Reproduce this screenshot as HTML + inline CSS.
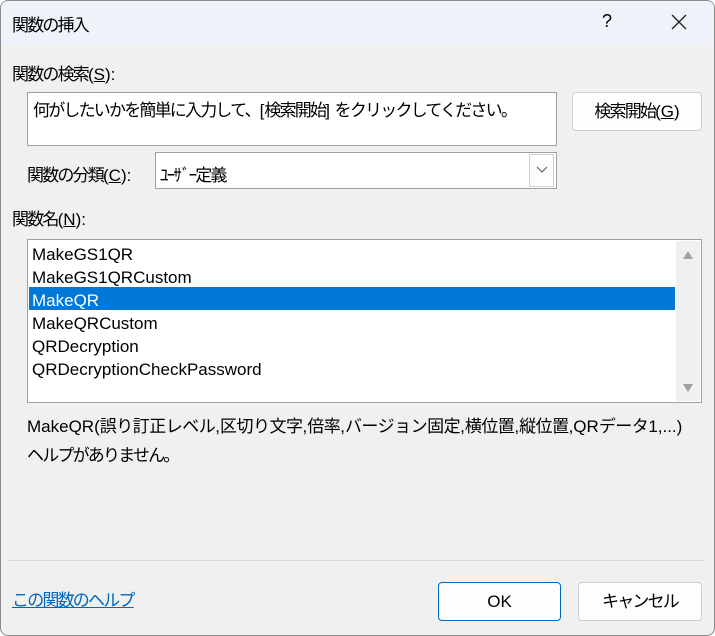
<!DOCTYPE html>
<html><head><meta charset="utf-8"><style>
*{margin:0;padding:0;box-sizing:border-box}
body{width:715px;height:636px;background:#fff;font-family:"Liberation Sans","Noto Sans CJK JP",sans-serif;font-size:17px;color:#000;overflow:hidden;position:relative}
.win{position:absolute;left:0;top:0;width:715px;height:636px;border:1px solid #8c8c8c;border-radius:8px;background:#f0f0f0;overflow:hidden}
.title{position:absolute;left:0;top:0;width:100%;height:44px;background:#eef2f9}
.a{position:absolute;white-space:nowrap}
.j{letter-spacing:-1.8px}
.k{letter-spacing:-0.5px}
.l{letter-spacing:0}
u{text-decoration:underline}
.box{position:absolute;background:#fff;border:1px solid #a0a0a0}
.btn{position:absolute;background:#fdfdfd;border:1px solid #d0d0d0;border-radius:4px;text-align:center}
</style></head><body>
<div class="win">
<div class="title"></div>
<div class="a j" style="left:11px;top:10px">関数の挿入</div>
<div class="a" style="left:601px;top:10px;font-size:18px">?</div>
<svg class="a" style="left:669px;top:12px" width="18" height="18"><path d="M2 2L16 16M16 2L2 16" stroke="#222" stroke-width="1.3"/></svg>
<div class="a j" style="left:11px;top:59px">関数の検索<span class="l">(<u>S</u>):</span></div>
<div class="box" style="left:26px;top:91px;width:530px;height:54px"></div>
<div class="a j" style="left:32px;top:95px">何がしたいかを簡単に入力して、<span class="l">[</span>検索開始<span class="l">] </span>をクリックしてください。</div>
<div class="btn" style="left:571px;top:91px;width:130px;height:39px;line-height:37px"><span class="j">検索開始</span>(<u>G</u>)</div>
<div class="a j" style="left:26px;top:160px">関数の分類<span class="l">(<u>C</u>):</span></div>
<div class="box" style="left:154px;top:151px;width:402px;height:37px"></div>
<div class="a j" style="left:159px;top:160px">ﾕｰｻﾞｰ定義</div>
<div class="a" style="left:528px;top:153px;width:25px;height:33px;border:1px solid #d0d0d0;background:#fdfdfd"></div>
<svg class="a" style="left:535px;top:165px" width="12" height="8"><path d="M1 1L6 6L11 1" stroke="#555" fill="none"/></svg>
<div class="a j" style="left:11px;top:204px">関数名<span class="l">(<u>N</u>):</span></div>
<div class="box" style="left:26px;top:238px;width:675px;height:164px"></div>
<div class="a" style="left:675px;top:240px;width:24px;height:160px;background:#f0f0f0"></div>
<svg class="a" style="left:681px;top:249px" width="12" height="10"><path d="M6 1L11 9H1Z" fill="#a0a0a0"/></svg>
<svg class="a" style="left:681px;top:382px" width="12" height="10"><path d="M6 9L11 1H1Z" fill="#a0a0a0"/></svg>
<div class="a" style="left:28px;top:286px;width:646px;height:23px;background:#0078d7"></div>
<div class="a" style="left:31px;top:242px;line-height:23px">MakeGS1QR<br>MakeGS1QRCustom<br><span style="color:#fff">MakeQR</span><br>MakeQRCustom<br>QRDecryption<br>QRDecryptionCheckPassword</div>
<div class="a" style="left:26px;top:411px">MakeQR(<span class="k">誤り訂正レベル</span>,<span class="k">区切り文字</span>,<span class="k">倍率</span>,<span class="k">バージョン固定</span>,<span class="k">横位置</span>,<span class="k">縦位置</span>,QR<span class="k">データ</span>1,...)</div>
<div class="a j" style="left:26px;top:440px">ヘルプがありません。</div>
<div class="a" style="left:7px;top:559px;width:697px;height:1px;background:#d8d8d8"></div>
<div class="a j" style="left:11px;top:585px;color:#0067c0;text-decoration:underline">この関数のヘルプ</div>
<div class="btn" style="left:437px;top:581px;width:123px;height:39px;line-height:37px;border-color:#0067c0">OK</div>
<div class="btn j" style="left:577px;top:581px;width:124px;height:39px;line-height:37px">キャンセル</div>
</div>
</body></html>
